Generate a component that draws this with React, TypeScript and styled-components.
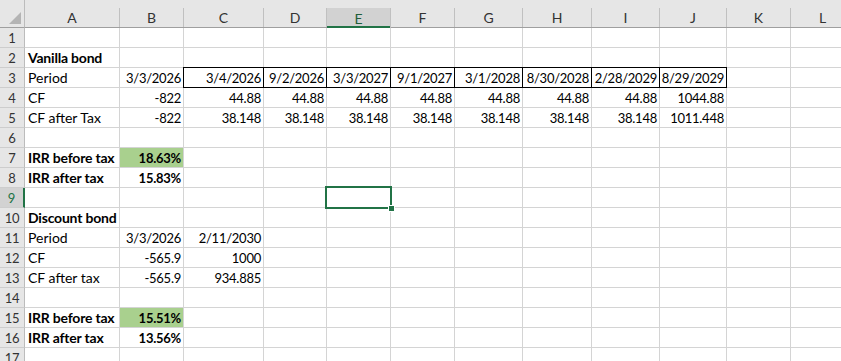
import React from "react";
import styled, { createGlobalStyle, css } from "styled-components";

const Global = createGlobalStyle`
  html, body { margin: 0; padding: 0; background: #fff; overflow: hidden; }
  body { font-family: Lato, "Liberation Sans", sans-serif; }
`;

const GRID = "#d4d4d4";
const GREEN = "#217346";

type CellDef = { v?: string; right?: boolean; bold?: boolean; fill?: boolean; boxed?: boolean };

const cols = [
  { key: "A", w: 95 },
  { key: "B", w: 64 },
  { key: "C", w: 80 },
  { key: "D", w: 63 },
  { key: "E", w: 64 },
  { key: "F", w: 64 },
  { key: "G", w: 68 },
  { key: "H", w: 69 },
  { key: "I", w: 68 },
  { key: "J", w: 67 },
  { key: "K", w: 64 },
  { key: "L", w: 64 },
];

const L = (v: string, bold = false): CellDef => ({ v, bold });
const N = (v: string, extra: Partial<CellDef> = {}): CellDef => ({ v, right: true, ...extra });

const rows: Record<number, CellDef[]> = {
  2: [L("Vanilla bond", true)],
  3: [
    L("Period"),
    N("3/3/2026"),
    ...["3/4/2026", "9/2/2026", "3/3/2027", "9/1/2027", "3/1/2028", "8/30/2028", "2/28/2029", "8/29/2029"].map((d) =>
      N(d, { boxed: true })
    ),
  ],
  4: [L("CF"), N("-822"), ...Array(7).fill(0).map(() => N("44.88")), N("1044.88")],
  5: [L("CF after Tax"), N("-822"), ...Array(7).fill(0).map(() => N("38.148")), N("1011.448")],
  7: [L("IRR before tax", true), N("18.63%", { bold: true, fill: true })],
  8: [L("IRR after tax", true), N("15.83%", { bold: true })],
  10: [L("Discount bond", true)],
  11: [L("Period"), N("3/3/2026"), N("2/11/2030")],
  12: [L("CF"), N("-565.9"), N("1000")],
  13: [L("CF after tax"), N("-565.9"), N("934.885")],
  15: [L("IRR before tax", true), N("15.51%", { bold: true, fill: true })],
  16: [L("IRR after tax", true), N("13.56%", { bold: true })],
};

const SEL_COL = "E";
const SEL_ROW = 9;

const Sheet = styled.div`
  display: grid;
  grid-template-columns: 25px ${cols.map((c) => `${c.w}px`).join(" ")};
  grid-template-rows: 28px;
  grid-auto-rows: 20px;
  width: 855px;
  font-size: 14px;
  color: #000;
`;

const Corner = styled.div`
  position: relative;
  background: #e6e6e6;
  border-bottom: 1px solid #9f9f9f;
  border-right: 1px solid #bcbcbc;
  box-sizing: border-box;
  &::after {
    content: "";
    position: absolute;
    right: 3px;
    bottom: 3px;
    width: 0;
    height: 0;
    border-left: 12px solid transparent;
    border-bottom: 12px solid #b4b4b4;
  }
`;

const ColHead = styled.div`
  background: #e6e6e6;
  border-bottom: 1px solid #9f9f9f;
  padding-top: 8px;
  box-sizing: border-box;
  display: flex;
`;

const ColLabel = styled.div<{ $sel?: boolean }>`
  flex: 1;
  display: flex;
  align-items: center;
  justify-content: center;
  border-right: 1px solid #c0c0c0;
  color: #333;
  font-size: 14px;
  ${(p) =>
    p.$sel &&
    css`
      background: #d2d2d2;
      color: #1e5e3a;
      box-shadow: inset 0 -2px 0 ${GREEN};
      margin-bottom: -1px;
    `}
`;

const RowHead = styled.div<{ $sel?: boolean }>`
  background: #e6e6e6;
  border-right: 1px solid #bcbcbc;
  border-bottom: 1px solid #cdcdcd;
  box-sizing: border-box;
  display: flex;
  align-items: center;
  justify-content: center;
  color: #333;
  font-size: 13px;
  letter-spacing: -0.2px;
  ${(p) =>
    p.$sel &&
    css`
      background: #d2d2d2;
      color: ${GREEN};
      border-right: 2px solid ${GREEN};
    `}
`;

const Cell = styled.div<{ $right?: boolean; $bold?: boolean; $fill?: boolean; $boxed?: boolean }>`
  position: relative;
  border-right: 1px solid ${GRID};
  border-bottom: 1px solid ${GRID};
  box-sizing: border-box;
  display: flex;
  align-items: center;
  justify-content: ${(p) => (p.$right ? "flex-end" : "flex-start")};
  padding: 0 2px 0 3px;
  white-space: nowrap;
  font-size: ${(p) => (p.$right ? "13px" : "14px")};
  letter-spacing: ${(p) => (p.$right ? "-0.25px" : p.$bold ? "-0.2px" : "0")};
  font-weight: ${(p) => (p.$bold ? 700 : 400)};
  background: ${(p) => (p.$fill ? "#a9d08e" : "transparent")};
  ${(p) =>
    p.$boxed &&
    css`
      &::after {
        content: "";
        position: absolute;
        top: -1px;
        left: -1px;
        right: -1px;
        bottom: -1px;
        border: 1px solid #000;
        z-index: 1;
      }
    `}
`;

const Selection = styled.div`
  position: absolute;
  top: -2px;
  left: -2px;
  right: -2px;
  bottom: -2px;
  border: 2px solid ${GREEN};
  z-index: 2;
`;

const FillHandle = styled.div`
  position: absolute;
  right: -5px;
  bottom: -5px;
  width: 5px;
  height: 5px;
  background: ${GREEN};
  border: 1px solid #fff;
  z-index: 3;
`;

export default function App() {
  const rowNums = Array.from({ length: 17 }, (_, i) => i + 1);
  return (
    <>
      <Global />
      <Sheet>
        <Corner />
        {cols.map((c) => (
          <ColHead key={c.key}>
            <ColLabel $sel={c.key === SEL_COL}>{c.key}</ColLabel>
          </ColHead>
        ))}
        {rowNums.map((r) => {
          const data = rows[r] || [];
          return (
            <React.Fragment key={r}>
              <RowHead $sel={r === SEL_ROW}>{r}</RowHead>
              {cols.map((c, ci) => {
                const d = data[ci] || {};
                const selected = c.key === SEL_COL && r === SEL_ROW;
                return (
                  <Cell key={c.key} $right={d.right} $bold={d.bold} $fill={d.fill} $boxed={d.boxed}>
                    {d.v}
                    {selected && (
                      <Selection>
                        <FillHandle />
                      </Selection>
                    )}
                  </Cell>
                );
              })}
            </React.Fragment>
          );
        })}
      </Sheet>
    </>
  );
}
